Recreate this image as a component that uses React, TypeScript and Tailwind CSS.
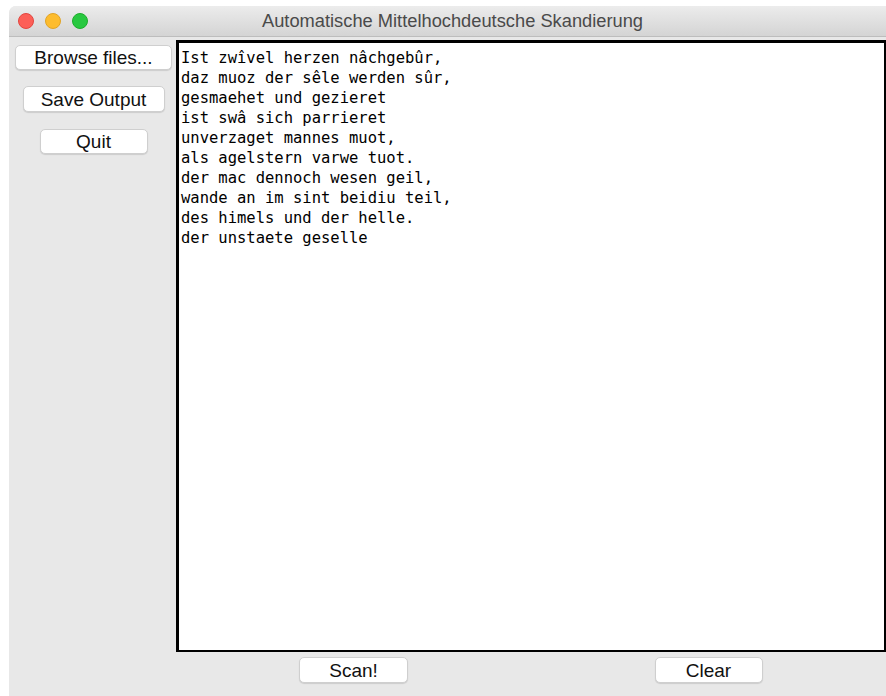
import React from "react";

const sans = { fontFamily: '"Liberation Sans", Arial, Helvetica, sans-serif' };
const mono = { fontFamily: '"DejaVu Sans Mono", "Liberation Mono", monospace' };

const poem = [
  "Ist zwîvel herzen nâchgebûr,",
  "daz muoz der sêle werden sûr,",
  "gesmaehet und gezieret",
  "ist swâ sich parrieret",
  "unverzaget mannes muot,",
  "als agelstern varwe tuot.",
  "der mac dennoch wesen geil,",
  "wande an im sint beidiu teil,",
  "des himels und der helle.",
  "der unstaete geselle",
];

function MacButton({ label, className }: { label: string; className: string }) {
  return (
    <button
      className={
        "flex items-center justify-center bg-white border border-[#cfcfcf] rounded-[5px] shadow-[0_1px_1px_rgba(0,0,0,0.12)] text-[19px] leading-none text-[#111] " +
        className
      }
      style={sans}
    >
      {label}
    </button>
  );
}

export default function App() {
  return (
    <div className="w-[886px] h-[696px] bg-white pl-[9px] pt-[6px] overflow-hidden">
      <div className="h-full flex flex-col bg-[#e8e8e8] rounded-tl-[7px] overflow-hidden">
        {/* title bar */}
        <div className="relative h-[31px] shrink-0 flex items-center bg-gradient-to-b from-[#ececec] to-[#d4d4d4] border-b border-[#bdbdbd]">
          <div className="flex items-center gap-[11px] pl-[9px]">
            <span className="block w-[16px] h-[16px] rounded-full bg-[#fc5f57] border border-[#e2463f]" />
            <span className="block w-[16px] h-[16px] rounded-full bg-[#fdbc2e] border border-[#e1a325]" />
            <span className="block w-[16px] h-[16px] rounded-full bg-[#28c840] border border-[#1dad2b]" />
          </div>
          <div
            className="absolute inset-0 flex items-center justify-center pl-[10px] text-[18.3px] text-[#4a4a4a]"
            style={sans}
          >
            Automatische Mittelhochdeutsche Skandierung
          </div>
        </div>

        {/* window body */}
        <div className="flex-1 flex">
          <div className="w-[167px] shrink-0 flex flex-col items-center pl-[2px] pt-[8px]">
            <MacButton label="Browse files..." className="w-[157px] h-[25px]" />
            <MacButton label="Save Output" className="w-[142px] h-[26px] mt-[16px]" />
            <MacButton label="Quit" className="w-[108px] h-[25px] mt-[17px]" />
          </div>

          <div className="flex-1 flex flex-col pt-[3px]">
            <div
              className="h-[612px] bg-white border-black border-l-[3px] border-t-[3px] border-r-2 border-b-2 pl-[2px] pt-[5px] text-[15.5px] leading-[20px] text-black"
              style={mono}
            >
              {poem.map((line) => (
                <div key={line} className="whitespace-pre">
                  {line}
                </div>
              ))}
            </div>
            <div className="grid grid-cols-2 pt-[5px]">
              <div className="flex justify-center">
                <MacButton label="Scan!" className="w-[109px] h-[26px]" />
              </div>
              <div className="flex justify-center">
                <MacButton label="Clear" className="w-[108px] h-[26px]" />
              </div>
            </div>
          </div>
        </div>
      </div>
    </div>
  );
}
